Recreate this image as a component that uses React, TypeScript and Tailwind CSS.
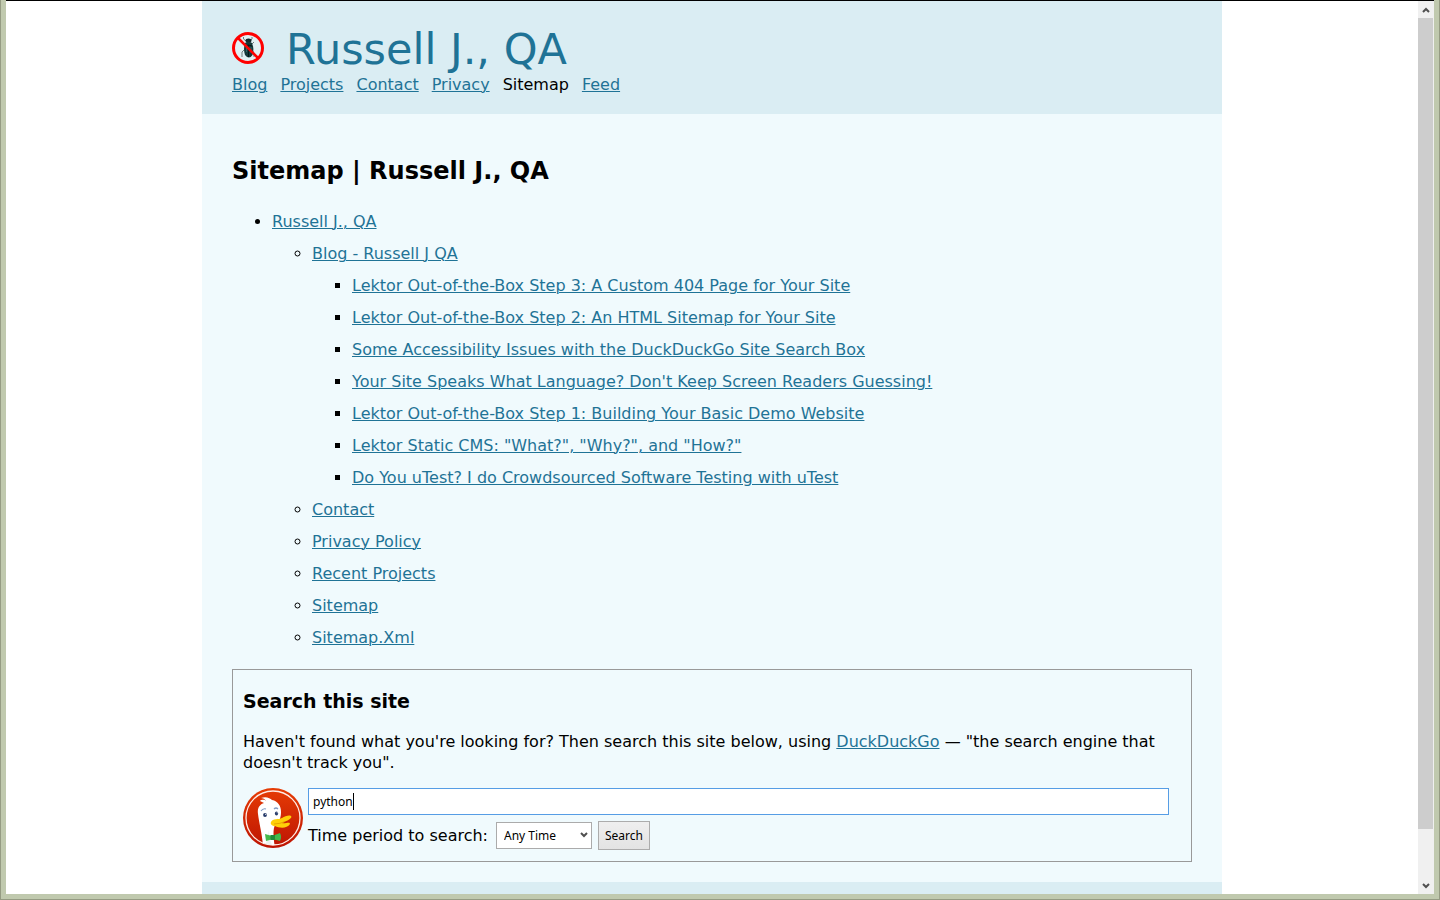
import React from "react";

const linkClass = "text-[#1f7396] underline decoration-1 underline-offset-1";

const navItems = ["Blog", "Projects", "Contact", "Privacy", "Sitemap", "Feed"];

const posts = [
  "Lektor Out-of-the-Box Step 3: A Custom 404 Page for Your Site",
  "Lektor Out-of-the-Box Step 2: An HTML Sitemap for Your Site",
  "Some Accessibility Issues with the DuckDuckGo Site Search Box",
  "Your Site Speaks What Language? Don't Keep Screen Readers Guessing!",
  "Lektor Out-of-the-Box Step 1: Building Your Basic Demo Website",
  "Lektor Static CMS: \"What?\", \"Why?\", and \"How?\"",
  "Do You uTest? I do Crowdsourced Software Testing with uTest",
];

const pages = ["Contact", "Privacy Policy", "Recent Projects", "Sitemap", "Sitemap.Xml"];

function PageLink({ children }: { children: React.ReactNode }) {
  return (
    <a href="#" className={linkClass}>
      {children}
    </a>
  );
}

function NoBugsLogo() {
  return (
    <svg viewBox="0 0 32 32" className="size-8 shrink-0" role="img" aria-label="No bugs">
      <circle cx="16" cy="16" r="14" fill="#e2f0f4" />
      <g stroke="#6d7b7d" strokeWidth="1" fill="none">
        <path d="M14 9 L11.5 7 V5 M18 9 L20 7 V5 M13 13 L10 11 M20 12 L22 10 M12 18 L10 20 V25 M20 18 L22 21 V25" />
      </g>
      <ellipse cx="16.5" cy="8.5" rx="3" ry="2" fill="#142528" />
      <path d="M13 11 Q16.5 8 20 11 Q22.500 17 20.500 23 Q17 28 13 23 Q11 17 13 11Z" fill="#15393b" />
      <path d="M13 14 Q16 12 20 14 M16.500 13 V25" stroke="#071719" fill="none" />
      <path d="M14.500 15 V20 M19 15 V21" stroke="#2d6567" fill="none" />
      <circle cx="16" cy="16" r="14.5" fill="none" stroke="#ff0000" strokeWidth="3" />
      <path d="M6 6 L26 26" stroke="#ff0000" strokeWidth="2.5" />
    </svg>
  );
}

function DuckLogo() {
  return (
    <svg viewBox="0 0 60 60" className="size-[60px] shrink-0" role="img" aria-label="DuckDuckGo">
      <defs>
        <linearGradient id="duck-red" x1="0" y1="0" x2="0" y2="1">
          <stop offset="0" stopColor="#e63c05" />
          <stop offset="1" stopColor="#bd1403" />
        </linearGradient>
        <clipPath id="duck-disc">
          <circle cx="30" cy="30" r="27" />
        </clipPath>
      </defs>
      <circle cx="30" cy="30" r="30" fill="url(#duck-red)" />
      <circle cx="30" cy="30" r="27" fill="none" stroke="#ffece6" strokeWidth="1.3" />
      <g clipPath="url(#duck-disc)">
        <path
          d="M20 60 C20 49 16 35 15 26 C14 20 17 16 21 15 L17 13 C19 11 22 12 23 13 C22 11 20 10 18 10 C23 8 27 10 29 12 C35 13 38 18 38 24 C38 29 37 33 32 37 C30 41 30 48 32 60Z"
          fill="#ffffff"
        />
        <path d="M26 42 C26 49 28 55 30 60 H22Z" fill="#dae3e3" opacity=".5" />
      </g>
      <path d="M18 23 Q20 20 23 21 M31 21 Q33 19 35 21" fill="none" stroke="#819bc4" strokeWidth="1.2" />
      <ellipse cx="22" cy="27" rx="1.9" ry="2.1" fill="#263a69" />
      <ellipse cx="33.5" cy="25.5" rx="1.6" ry="1.9" fill="#263a69" />
      <circle cx="22.7" cy="26.3" r=".6" fill="#fff" />
      <circle cx="34.1" cy="24.8" r=".5" fill="#fff" />
      <path
        d="M28 34 C30 30 35 32 39 30 C42 28 46 27 48 28 C50 30 44 33 39 35 C42 36 47 33 47 36 C44 41 36 40 32 38 C29 38 27 36 28 34Z"
        fill="#ffcf08"
      />
      <path d="M31 36 Q37 36 42 33.500" fill="none" stroke="#e5a000" strokeWidth=".9" />
      <path d="M22 46 L29 48 L37 45 Q39 49 37 53 L30 51 L23 53Z" fill="#45b94b" />
      <path d="M27.500 47 H32 V52 H27.500Z" fill="#218b3a" />
    </svg>
  );
}

function Chevron({ up = false }: { up?: boolean }) {
  return (
    <svg viewBox="0 0 8 6" className="h-[6px] w-2" aria-hidden="true">
      <path d={up ? "M1 5 L4 2 L7 5" : "M1 1 L4 4 L7 1"} fill="none" stroke="#505050" strokeWidth="2" />
    </svg>
  );
}

function Scrollbar() {
  return (
    <div className="flex w-4 shrink-0 flex-col bg-[#f0f0f0] pr-px">
      <button type="button" aria-label="Scroll up" className="flex h-[17px] shrink-0 items-center justify-center">
        <Chevron up />
      </button>
      <div className="min-h-0 flex-1">
        <div className="h-[94.4%] bg-[#cdcdcd]" />
      </div>
      <button type="button" aria-label="Scroll down" className="flex h-[17px] shrink-0 items-center justify-center">
        <Chevron />
      </button>
    </div>
  );
}

function SearchBox() {
  return (
    <section className="border border-[#999999] px-[10px] pt-[18px] pb-[11px]">
      <h2 className="text-[19px] leading-[26px] font-bold">Search this site</h2>
      <p className="mt-[17px] leading-[21px]">
        Haven't found what you're looking for? Then search this site below, using <PageLink>DuckDuckGo</PageLink> — "the
        search engine that doesn't track you".
      </p>
      <form className="mt-[15px] flex gap-[5px]" onSubmit={(e) => e.preventDefault()}>
        <DuckLogo />
        <div className="min-w-0 flex-1 pr-3">
          <div className="relative">
            <input
              type="text"
              aria-label="Search terms"
              defaultValue="python"
              className="block h-[27px] w-full border border-[#569de5] bg-white px-1 font-['Noto_Sans',sans-serif] text-xs outline-none"
            />
            <span className="absolute top-[5px] left-[45px] h-[17px] w-px bg-black" aria-hidden="true" />
          </div>
          <div className="mt-[6px] flex items-center">
            <label htmlFor="period">Time period to search:</label>
            <div className="relative ml-2">
              <select
                id="period"
                className="block h-[27px] w-24 appearance-none border border-[#ababab] bg-white pl-[7px] font-['Noto_Sans',sans-serif] text-xs"
              >
                <option>Any Time</option>
              </select>
              <span className="pointer-events-none absolute top-[10px] right-[4px]">
                <Chevron />
              </span>
            </div>
            <button
              type="submit"
              className="ml-[6px] h-[29px] border border-[#acacac] bg-linear-to-b from-[#efefef] to-[#e3e3e3] px-[6px] font-['Noto_Sans',sans-serif] text-xs"
            >
              Search
            </button>
          </div>
        </div>
      </form>
    </section>
  );
}

export default function App() {
  return (
    <div className="flex h-screen overflow-hidden border-r border-b border-l border-[#959b83] bg-[#c0c9ae] px-[5px] pb-[5px] font-['DejaVu_Sans',sans-serif] text-base text-black">
      <div className="flex min-w-0 flex-1 border-t border-black bg-white">
        <div className="min-w-0 flex-1 overflow-hidden">
          <div className="mx-auto max-w-[1020px] bg-[#f0fafd]">
            <header className="bg-[#daedf3] px-[30px] pt-6 pb-[18px]">
              <div className="flex items-start gap-[22px]">
                <div className="pt-[7px]">
                  <NoBugsLogo />
                </div>
                <a href="#" className="text-[43px] leading-[48px] text-[#1f7396]">
                  Russell J., QA
                </a>
              </div>
              <nav className="flex gap-[13px] leading-[23px]">
                {navItems.map((item) =>
                  item === "Sitemap" ? <span key={item}>{item}</span> : <PageLink key={item}>{item}</PageLink>
                )}
              </nav>
            </header>
            <main className="px-[30px] pt-[41px] pb-5">
              <h1 className="text-2xl leading-8 font-bold">Sitemap | Russell J., QA</h1>
              <ul className="mt-[19px] mb-[15px] list-disc pl-10 leading-8">
                <li>
                  <PageLink>Russell J., QA</PageLink>
                  <ul className="list-[circle] pl-10">
                    <li>
                      <PageLink>Blog - Russell J QA</PageLink>
                      <ul className="list-[square] pl-10">
                        {posts.map((post) => (
                          <li key={post}>
                            <PageLink>{post}</PageLink>
                          </li>
                        ))}
                      </ul>
                    </li>
                    {pages.map((page) => (
                      <li key={page}>
                        <PageLink>{page}</PageLink>
                      </li>
                    ))}
                  </ul>
                </li>
              </ul>
              <SearchBox />
            </main>
            <footer className="h-24 bg-[#daedf3]" />
          </div>
        </div>
        <Scrollbar />
      </div>
    </div>
  );
}
